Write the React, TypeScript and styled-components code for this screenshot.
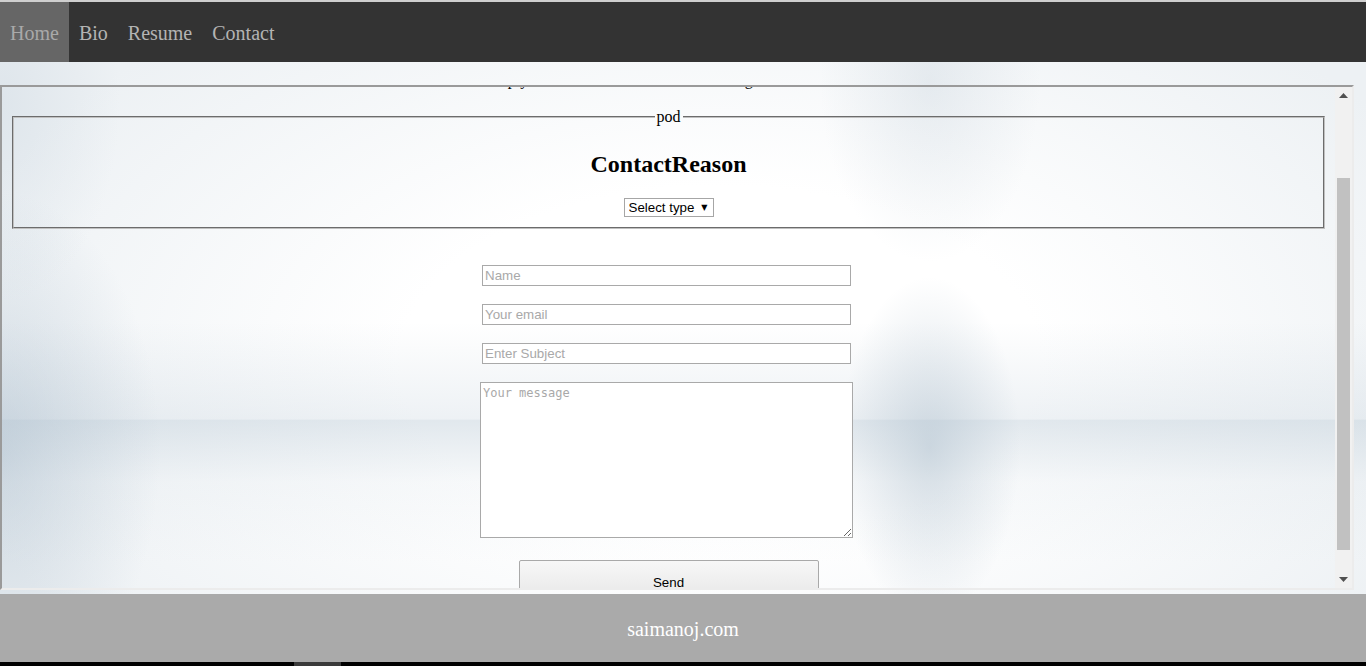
import React, { useLayoutEffect, useRef } from "react";
import styled, { createGlobalStyle } from "styled-components";

const Global = createGlobalStyle`
  html, body { margin: 0; padding: 0; }
  body {
    background: #000;
    font-family: "Liberation Serif", "Times New Roman", serif;
    overflow: hidden;
  }
  * { box-sizing: border-box; }
`;

const Page = styled.div`
  display: flex;
  flex-direction: column;
  width: 1366px;
  height: 666px;
  & > * { flex: none; }
`;

const Nav = styled.nav`
  display: flex;
  height: 62px;
  background: #333;
  border-top: 2px solid #cfcfcf;
`;

const NavItem = styled.a<{ $active?: boolean }>`
  display: flex;
  align-items: center;
  padding: 2px 10px 0;
  font-size: 20px;
  color: ${(p) => (p.$active ? "#a9a9a9" : "#b4b4b4")};
  background: ${(p) => (p.$active ? "#666" : "transparent")};
  text-decoration: none;
`;

const Main = styled.main`
  height: 532px;
  padding-top: 23px;
  background:
    radial-gradient(90px 170px at 930px 385px, rgba(160, 180, 196, 0.42), rgba(160, 180, 196, 0) 100%),
    radial-gradient(110px 180px at 930px 20px, rgba(196, 208, 218, 0.35), rgba(196, 208, 218, 0) 100%),
    radial-gradient(160px 260px at 0px 390px, rgba(165, 184, 200, 0.45), rgba(165, 184, 200, 0) 100%),
    radial-gradient(120px 200px at 0px 40px, rgba(200, 212, 222, 0.4), rgba(200, 212, 222, 0) 100%),
    linear-gradient(to bottom, rgba(255,255,255,0) 0, rgba(255,255,255,0) 357px, rgba(180, 197, 210, 0.4) 358px, rgba(215, 224, 231, 0.2) 420px, rgba(255,255,255,0) 500px),
    linear-gradient(to bottom, rgba(205, 216, 225, 0) 260px, rgba(205, 216, 225, 0.35) 357px, rgba(205, 216, 225, 0) 358px),
    radial-gradient(ellipse 800px 440px at 720px 300px, #ffffff 40%, #edf1f4 100%);
`;

const Frame = styled.div`
  display: flex;
  width: 1354px;
  height: 505px;
  border-style: solid;
  border-width: 2px;
  border-color: #9a9a9a #ececec #ececec #9a9a9a;
`;

const Viewport = styled.div`
  flex: 1;
  height: 100%;
  overflow: hidden;
`;

const Content = styled.div`
  padding: 8px 8px 12px;
  text-align: center;
`;

const Intro = styled.p`
  margin: 76px 0 19px;
  font-size: 16px;
  line-height: 18px;
  color: #000;
`;

const Fieldset = styled.fieldset`
  margin: 0 2px;
  padding: 5px 12px 10px;
  border: 2px groove #c0c0c0;
  text-align: center;
`;

const Legend = styled.legend`
  margin: 0 auto;
  padding: 0 2px;
  font-size: 16px;
  line-height: 18px;
  color: #000;
`;

const ReasonTitle = styled.h2`
  margin: 20px 0;
  font-size: 24px;
  line-height: 27px;
  font-weight: bold;
  color: #000;
`;

const SelectWrap = styled.label`
  display: inline-flex;
  align-items: center;
  width: 90px;
  height: 19px;
  background: #fff;
  border: 1px solid #a6a6a6;
  vertical-align: top;
`;

const Select = styled.select`
  appearance: none;
  flex: 1;
  min-width: 0;
  height: 100%;
  border: 0;
  background: transparent;
  padding: 0 0 0 4px;
  font-family: "Liberation Sans", Arial, sans-serif;
  font-size: 13.33px;
  color: #000;
  outline: none;
`;

const Caret = styled.span`
  font-family: "DejaVu Sans", sans-serif;
  font-size: 8px;
  color: #000;
  padding-right: 5px;
  pointer-events: none;
`;

const Form = styled.form`
  display: flex;
  flex-direction: column;
  align-items: center;
  padding-top: 36px;
`;

const TextInput = styled.input`
  width: 369px;
  height: 21px;
  margin: 0 4px 18px 0;
  padding: 1px 2px;
  border: 1px solid #a9a9a9;
  background: #fff;
  font-family: "Liberation Sans", Arial, sans-serif;
  font-size: 13.33px;
  color: #000;
  outline: none;
  &::placeholder { color: #a9a9a9; }
`;

const Message = styled.textarea`
  width: 373px;
  height: 156px;
  margin: 0 4px 22px 0;
  padding: 2px;
  border: 1px solid #a9a9a9;
  background: #fff;
  font-family: "DejaVu Sans Mono", "Liberation Mono", monospace;
  font-size: 12px;
  line-height: 16px;
  color: #000;
  outline: none;
  &::placeholder { color: #a9a9a9; }
`;

const SendButton = styled.button`
  width: 300px;
  height: 44px;
  border: 1px solid #a9a9a9;
  border-radius: 2px;
  background: linear-gradient(to bottom, #f7f7f7, #e6e6e6);
  font-family: "Liberation Sans", Arial, sans-serif;
  font-size: 13.33px;
  color: #000;
  padding-top: 1px;
`;

const Scrollbar = styled.div`
  display: flex;
  flex-direction: column;
  width: 17px;
  height: 100%;
  background: #f1f1f1;
`;

const ScrollButton = styled.div`
  display: flex;
  align-items: center;
  justify-content: center;
  height: 17px;
  flex: none;
`;

const Track = styled.div`
  flex: 1;
  padding: 74px 2px 0;
`;

const Thumb = styled.div`
  height: 372px;
  background: #c1c1c1;
`;

const Footer = styled.footer`
  display: flex;
  align-items: center;
  justify-content: center;
  height: 68px;
  background: #aaa;
  color: #fff;
  font-size: 20px;
  padding-top: 3px;
`;

const BottomStrip = styled.div`
  display: flex;
  height: 4px;
  background: #000;
  padding-left: 294px;
`;

const StripMark = styled.div`
  width: 47px;
  background: #3a3a3a;
`;

const Arrow = ({ down }: { down?: boolean }) => (
  <svg width="9" height="5" viewBox="0 0 9 5">
    {down ? <polygon points="0,0 9,0 4.5,5" fill="#505050" /> : <polygon points="0,5 9,5 4.5,0" fill="#505050" />}
  </svg>
);

export default function App() {
  const vp = useRef<HTMLDivElement>(null);
  useLayoutEffect(() => {
    if (vp.current) vp.current.scrollTop = 100;
  }, []);

  return (
    <Page>
      <Global />
      <Nav>
        <NavItem href="#" $active>Home</NavItem>
        <NavItem href="#">Bio</NavItem>
        <NavItem href="#">Resume</NavItem>
        <NavItem href="#">Contact</NavItem>
      </Nav>
      <Main>
        <Frame>
          <Viewport ref={vp}>
            <Content>
              <Intro>Simply fill out this form below and I am glad to answer it.</Intro>
              <Fieldset>
                <Legend>pod</Legend>
                <ReasonTitle>ContactReason</ReasonTitle>
                <SelectWrap>
                  <Select defaultValue="">
                    <option value="">Select type</option>
                    <option value="job">Job</option>
                    <option value="project">Project</option>
                    <option value="other">Other</option>
                  </Select>
                  <Caret>▼</Caret>
                </SelectWrap>
              </Fieldset>
              <Form onSubmit={(e) => e.preventDefault()}>
                <TextInput type="text" placeholder="Name" />
                <TextInput type="email" placeholder="Your email" />
                <TextInput type="text" placeholder="Enter Subject" />
                <Message placeholder="Your message" />
                <SendButton type="submit">Send</SendButton>
              </Form>
            </Content>
          </Viewport>
          <Scrollbar>
            <ScrollButton><Arrow /></ScrollButton>
            <Track><Thumb /></Track>
            <ScrollButton><Arrow down /></ScrollButton>
          </Scrollbar>
        </Frame>
      </Main>
      <Footer>saimanoj.com</Footer>
      <BottomStrip><StripMark /></BottomStrip>
    </Page>
  );
}
